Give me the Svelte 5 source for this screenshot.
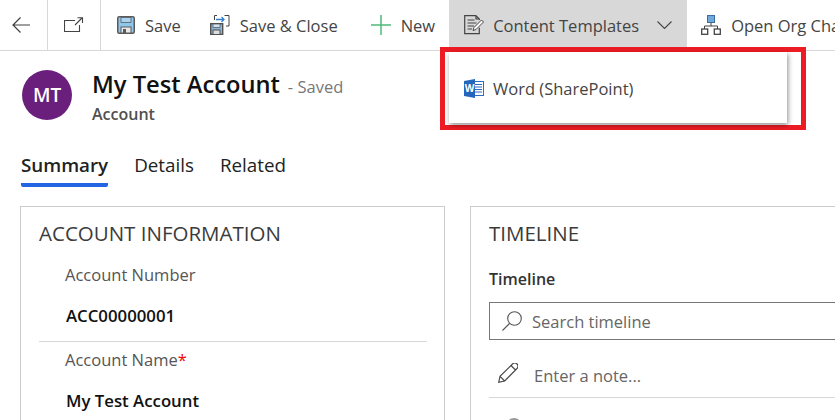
<script>
    const commands = [
        { id: 'save', label: 'Save' },
        { id: 'saveclose', label: 'Save & Close' },
        { id: 'new', label: 'New' }
    ];
    const tabs = ['Summary', 'Details', 'Related'];
</script>

<div class="page">
    <div class="toolbar">
        <button class="nav back" aria-label="Back">
            <svg width="18" height="16" viewBox="0 0 18 16"><path d="M1 8h17M8.500 .5 1 8l7.500 7.500" fill="none" stroke="#404040" stroke-width="1.200"/></svg>
        </button>
        <button class="nav popout" aria-label="Open in new window">
            <svg width="20" height="16" viewBox="0 0 20 16"><path d="M11 3.500H.5v11h15V8M11 8l7-7M13.500 .8H18.500V6" fill="none" stroke="#444" stroke-width="1.100"/></svg>
        </button>
        {#each commands as c}
            <div class="cmd {c.id}">
                {#if c.id === 'save'}
                    <svg width="18" height="18" viewBox="0 0 18 18"><rect x="0.750" y="0.750" width="16.500" height="16.500" rx="1.500" fill="#8fc6ec" stroke="#5a5a5a" stroke-width="1.500"/><path d="M4 1.500h10v5H4z" fill="#a9d3f0" stroke="#5a5a5a" stroke-width="0.800"/><rect x="4" y="11" width="10" height="6" fill="#e8e8e8" stroke="#5a5a5a"/><rect x="6" y="13" width="3" height="4" fill="#5a5a5a"/></svg>
                {:else if c.id === 'saveclose'}
                    <svg width="20" height="20" viewBox="0 0 20 20"><path d="M14.500 .5H19V11H16" fill="none" stroke="#444"/><path d="M7 .5H4.500V5" fill="none" stroke="#444"/><path d="M6 4.500h8M11.500 2 14 4.500 11.500 7" fill="none" stroke="#2f7fd0" stroke-width="1.300"/><rect x="0.700" y="8.700" width="12" height="10.800" fill="#8fb6d4" stroke="#505050" stroke-width="1.400"/><rect x="3" y="9" width="7" height="3.500" fill="#cfe2f0" stroke="#505050" stroke-width="0.700"/><rect x="3" y="15" width="7" height="4.500" fill="#ddd" stroke="#505050"/></svg>
                {:else}
                    <svg width="20" height="20" viewBox="0 0 20 20"><path d="M10 0v20M0 10h20" stroke="#4fb97c" stroke-width="1.500"/></svg>
                {/if}
                <span>{c.label}</span>
            </div>
        {/each}
        <div class="cmd templates">
            <svg width="20" height="20" viewBox="0 0 20 20"><path d="M12 .7H.7v18h14.600v-6M15.300 5V4L12 .7V4h3.300" fill="none" stroke="#444" stroke-width="1.200"/><path d="M3.500 5h7M3.500 8h9M3.500 11h6.500M3.500 14h4.500" stroke="#444"/><path d="M17.500 5l2 2-7.500 7.500-3 1 1-3z" fill="#fff" stroke="#444"/></svg>
            <span>Content Templates</span>
            <svg class="chev" width="15" height="8" viewBox="0 0 15 8"><path d="M.5 .5l7 7 7-7" fill="none" stroke="#444" stroke-width="1.100"/></svg>
        </div>
        <div class="cmd org">
            <svg width="20" height="20" viewBox="0 0 20 20"><rect x="6.500" y=".5" width="7" height="7" fill="#6ea8dc" stroke="#3d6f9e"/><path d="M10 7.500V11M3.500 14v-3h13v3" fill="none" stroke="#444"/><rect x=".7" y="14" width="6" height="5.300" fill="#fff" stroke="#444" stroke-width="1.300"/><rect x="13.300" y="14" width="6" height="5.300" fill="#fff" stroke="#444" stroke-width="1.300"/></svg>
            <span>Open Org Chart</span>
        </div>
    </div>

    <div class="header">
        <div class="avatar">MT</div>
        <div>
            <div class="title"><strong>My Test Account</strong><span class="saved">- Saved</span></div>
            <div class="entity">Account</div>
        </div>
    </div>

    <div class="tabs">
        {#each tabs as t, i}
            <div class="tab" class:active={i === 0}>{t}</div>
        {/each}
    </div>

    <div class="columns">
        <section class="card info">
            <h2>ACCOUNT INFORMATION</h2>
            <div class="field first">
                <div class="label">Account Number</div>
                <div class="value">ACC00000001</div>
            </div>
            <div class="field">
                <div class="label">Account Name<span class="req">*</span></div>
                <div class="value">My Test Account</div>
            </div>
        </section>
        <section class="card timeline">
            <h2>TIMELINE</h2>
            <div class="tl-label">Timeline</div>
            <div class="search">
                <svg width="20" height="20" viewBox="0 0 20 20"><circle cx="12.500" cy="7.500" r="6.800" fill="none" stroke="#555" stroke-width="1.100"/><path d="M7.500 12.500 .5 19.500" stroke="#555" stroke-width="1.100"/></svg>
                <span>Search timeline</span>
            </div>
            <div class="note">
                <svg class="pencil" width="20" height="20" viewBox="0 0 20 20"><path d="M.7 19.300l1.300-6L14.500 1a2.500 2.500 0 0 1 4.500 4.500L6.700 18zM2 13.300l4.700 4.700M13 2.500l4.500 4.500" fill="none" stroke="#444" stroke-width="1.100"/></svg>
                <span>Enter a note...</span>
            </div>
            <div class="row-icon"></div>
        </section>
    </div>

    <div class="menu-highlight">
        <div class="menu">
            <svg width="20" height="19" viewBox="0 0 20 19"><rect x="7" y="2.500" width="12.500" height="14" fill="#fff" stroke="#2b6cc4"/><path d="M11 5.500h7M11 8h7M11 10.500h7M11 13h7" stroke="#2b6cc4"/><path d="M0 2l11-2v19L0 17z" fill="#2566bd"/><text x="5.500" y="12.500" class="w">W</text></svg>
            <span>Word (SharePoint)</span>
        </div>
    </div>
</div>

<style>
    :global(body) {
        margin: 0;
        background: #fff;
        overflow: hidden;
    }

    .page {
        position: relative;
        width: 835px;
        height: 420px;
        overflow: hidden;
        font-family: "Open Sans", "Noto Sans", sans-serif;
        color: #333;
    }

    .toolbar {
        display: flex;
        height: 50px;
        border-bottom: 1px solid #d8d8d8;
        white-space: nowrap;
    }

    .toolbar > * {
        flex: none;
    }

    .nav {
        display: flex;
        align-items: center;
        padding: 0;
        background: #fff;
        border: 0;
    }

    .back {
        width: 47px;
        padding-left: 12px;
        box-sizing: border-box;
    }

    .popout {
        width: 54px;
        height: 50px;
        box-sizing: border-box;
        justify-content: center;
        border-left: 1px solid #d8d8d8;
        border-right: 1px solid #d8d8d8;
    }

    .cmd {
        display: flex;
        align-items: center;
        gap: 10px;
        font-size: 16.500px;
        color: #444;
        height: 50px;
    }

    .save { margin-left: 16px; }
    .saveclose { margin-left: 29px; }
    .new { margin-left: 33px; }

    .templates {
        margin-left: 14px;
        padding: 0 0 0 15px;
        gap: 9px;
        width: 238px;
        box-sizing: border-box;
        background: #d8d8d8;
    }

    .chev { margin-left: 9px; }

    .org { margin-left: 14px; }

    .header {
        display: flex;
        gap: 20px;
        padding: 19px 0 0 22px;
    }

    .avatar {
        display: flex;
        align-items: center;
        justify-content: center;
        width: 50px;
        height: 50px;
        border-radius: 50%;
        background: #6b1f7c;
        color: #fff;
        font-size: 19px;
        font-weight: 600;
    }

    .title {
        display: flex;
        align-items: baseline;
        gap: 8px;
        line-height: 30px;
        margin-top: -1px;
    }

    .title strong {
        font-size: 23.700px;
        font-weight: 600;
        color: #111;
    }

    .saved {
        font-size: 16.500px;
        color: #777;
    }

    .entity {
        margin-top: 2px;
        font-size: 16px;
        font-weight: 600;
        color: #505050;
        line-height: 20px;
    }

    .tabs {
        display: flex;
        gap: 26px;
        margin: 25px 0 0 21px;
    }

    .tab {
        font-size: 18.800px;
        line-height: 32px;
        height: 38px;
        box-sizing: border-box;
        color: #222;
    }

    .active {
        font-weight: 600;
        border-bottom: 4px solid #2266e3;
        border-radius: 2px;
    }

    .columns {
        display: flex;
        gap: 25px;
        margin: 19px 0 0 20px;
    }

    .card {
        flex: none;
        box-sizing: border-box;
        height: 260px;
        border: 1px solid #ccc;
    }

    .info {
        width: 425px;
        padding: 0 17px 0 18px;
    }

    .timeline {
        width: 400px;
        padding: 0 18px;
    }

    h2 {
        margin: 0;
        font-size: 20.500px;
        font-weight: 400;
        line-height: 26px;
        padding-top: 13px;
        color: #3b3b3b;
    }

    .field {
        padding-left: 26px;
    }

    .first {
        margin-top: 11px;
        border-bottom: 1px solid #d8d8d8;
    }

    .label {
        font-size: 16.500px;
        line-height: 22px;
        color: #555;
        padding-top: 7px;
    }

    .value {
        font-size: 16.800px;
        font-weight: 600;
        color: #111;
        line-height: 22px;
        padding: 19px 0 14px;
        margin-left: 1px;
    }

    .req {
        color: #e00;
    }

    .tl-label {
        margin-top: 22px;
        font-size: 16px;
        font-weight: 600;
        color: #333;
        line-height: 22px;
    }

    .search {
        display: flex;
        align-items: center;
        gap: 10px;
        box-sizing: border-box;
        height: 38px;
        margin-top: 12px;
        margin-right: -40px;
        padding-left: 12px;
        border: 1px solid #777;
        font-size: 16.500px;
        color: #666;
    }

    .note {
        display: flex;
        align-items: center;
        gap: 16px;
        box-sizing: border-box;
        height: 58px;
        padding: 13px 0 0 9px;
        margin-right: -40px;
        border-bottom: 1px solid #d8d8d8;
        font-size: 16.500px;
        color: #666;
    }

    .pencil {
        margin-top: -5px;
    }

    .row-icon {
        width: 16px;
        height: 16px;
        margin: 20px 0 0 17px;
        border-radius: 50%;
        background: #9a9a9a;
    }

    .menu-highlight {
        position: absolute;
        left: 440px;
        top: 47px;
        width: 366px;
        height: 83px;
        box-sizing: border-box;
        border: 5px solid #ed1c24;
        padding-left: 4px;
    }

    .menu {
        display: flex;
        align-items: center;
        gap: 9px;
        width: 338px;
        height: 71px;
        padding: 2px 0 0 15px;
        box-sizing: border-box;
        background: #fff;
        box-shadow: 1px 2px 5px rgba(0, 0, 0, 0.45);
        font-size: 16.500px;
        color: #444;
    }

    .w {
        font-size: 10px;
        font-weight: 700;
        fill: #fff;
        text-anchor: middle;
    }
</style>
